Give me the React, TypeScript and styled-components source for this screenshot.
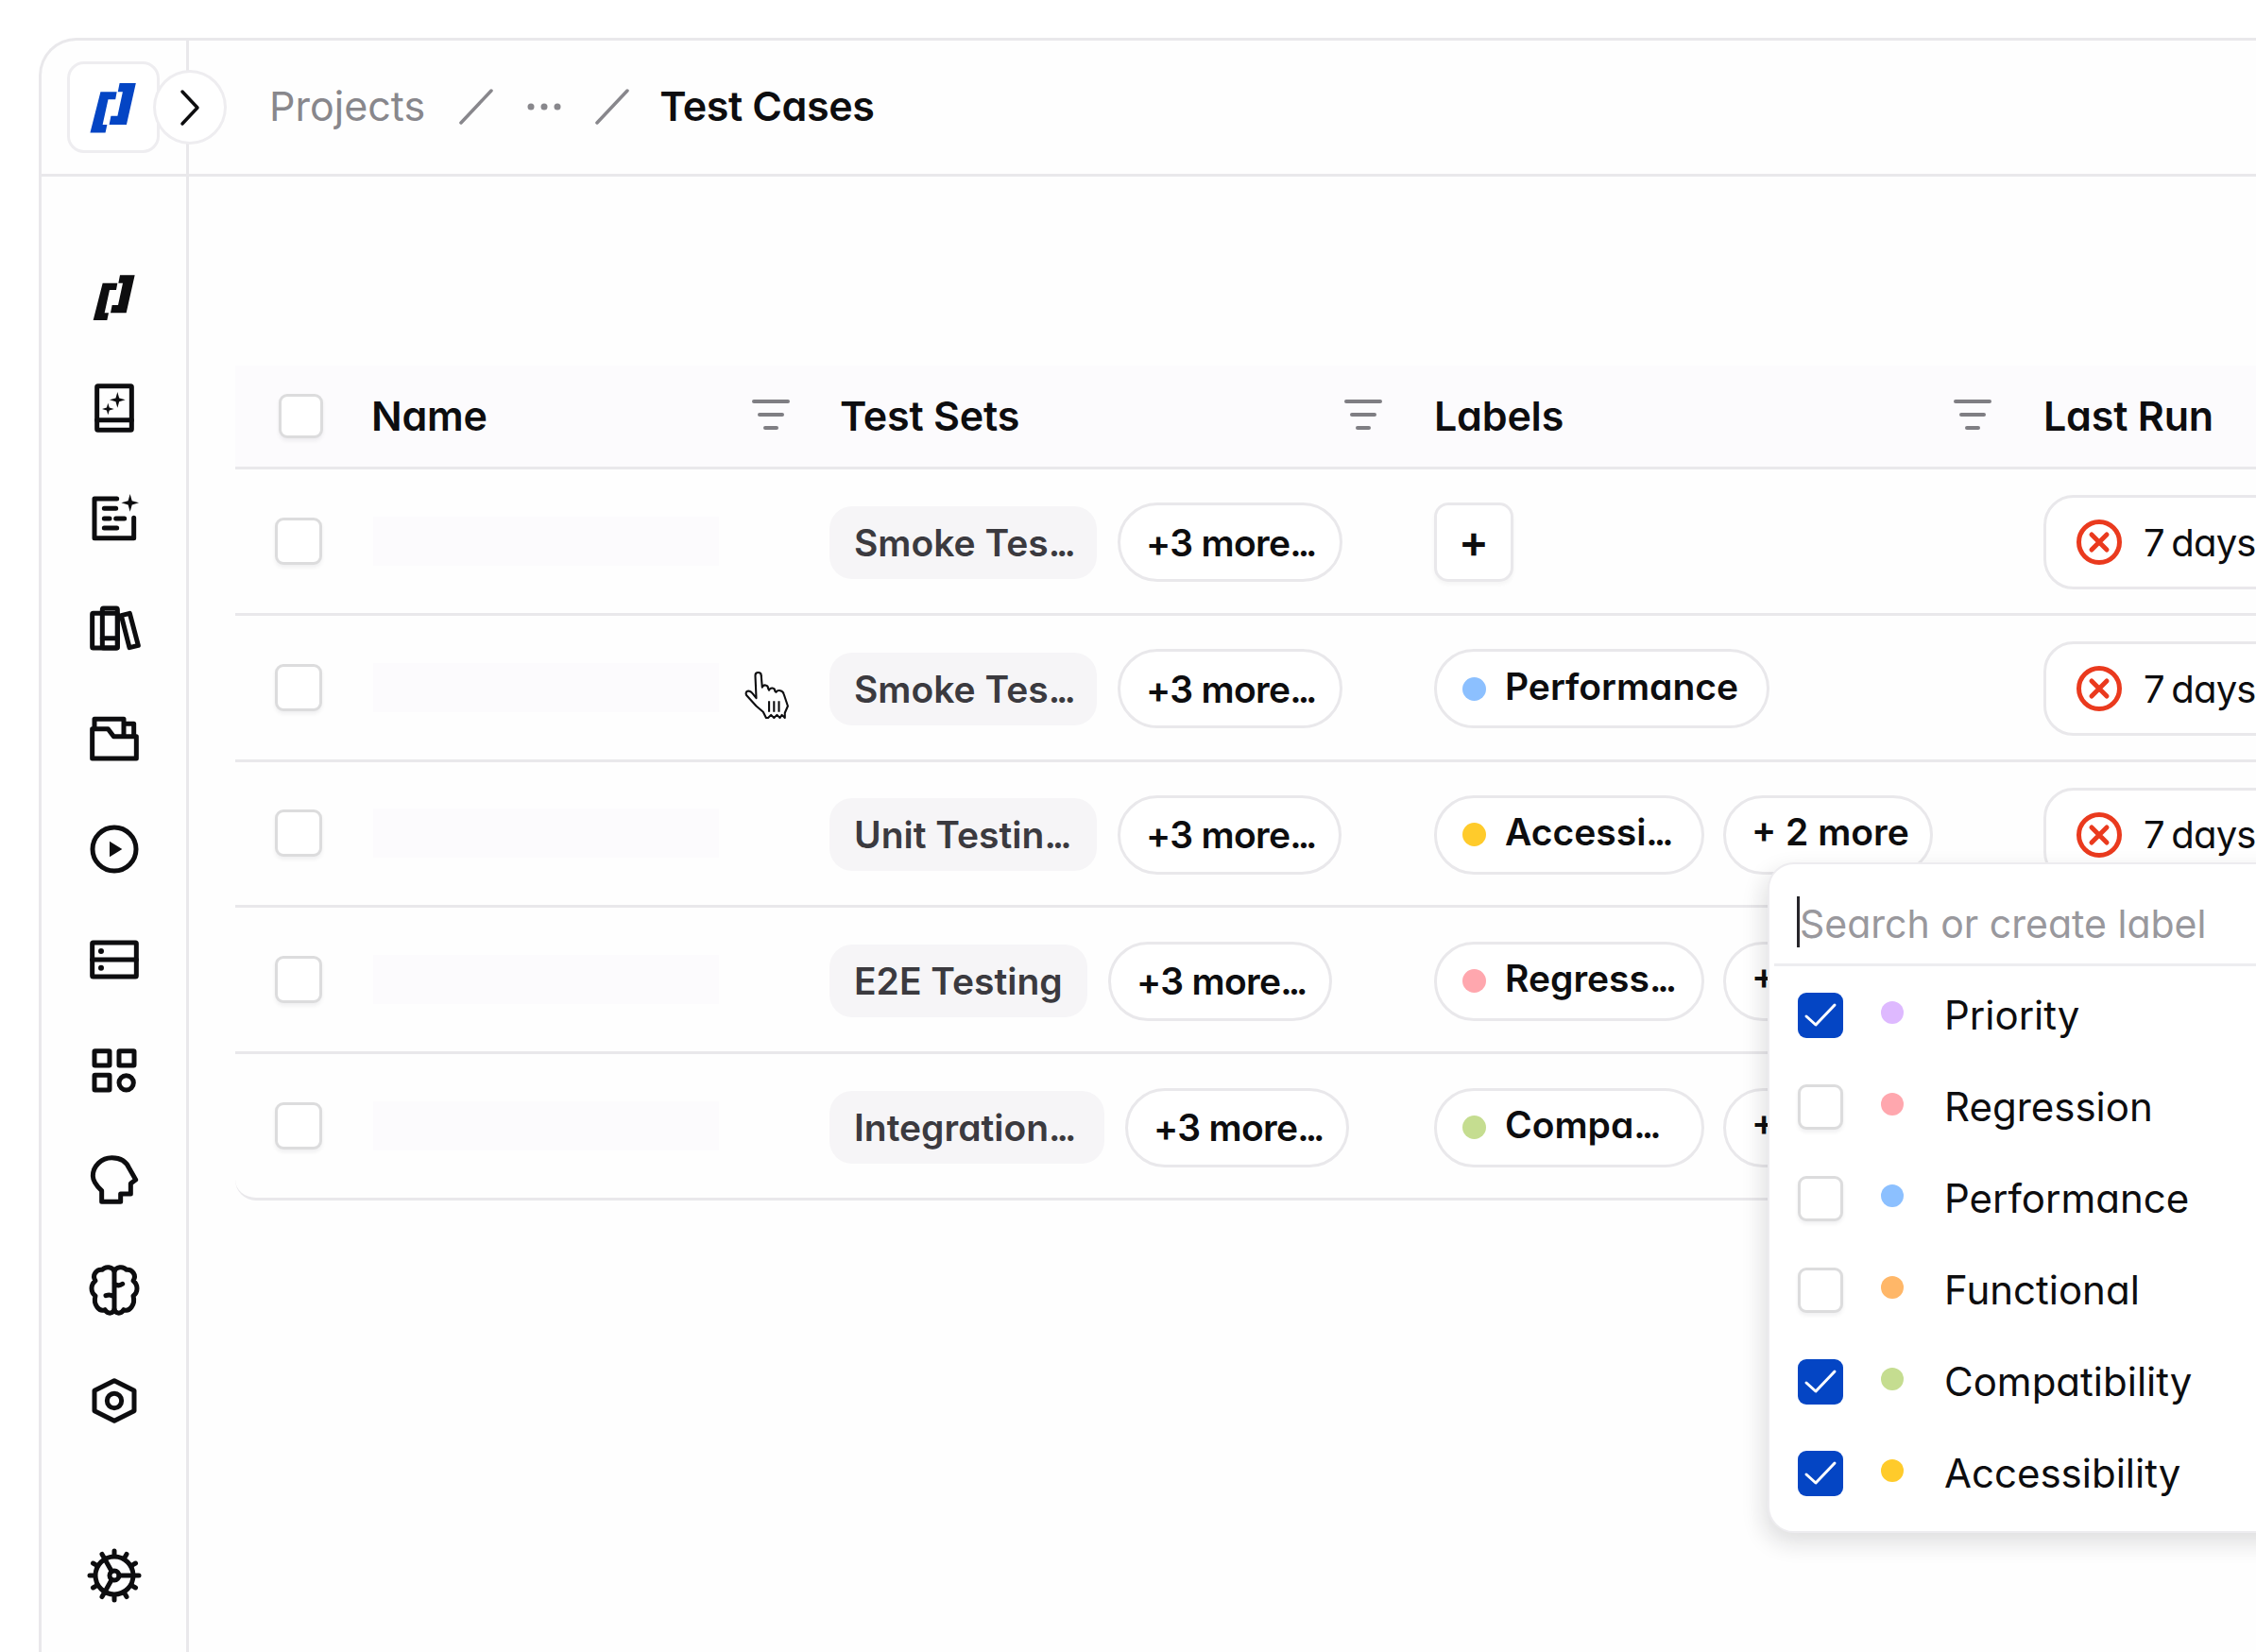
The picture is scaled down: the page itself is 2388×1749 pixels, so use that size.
import React from "react";
import styled, { createGlobalStyle } from "styled-components";

const Global = createGlobalStyle`
  html, body { margin: 0; height: 100%; overflow: hidden; background: #fff; }
  #root { height: 100%; }
  * { box-sizing: border-box; }
  body { font-family: Inter, "Liberation Sans", sans-serif; font-feature-settings: "cv11" 1; color: #0d0d0f; }
`;

const line = "#e9e8eb";

const Page = styled.div`
  height: 100vh;
  padding: 40px 0 0 41px;
  overflow: hidden;
  display: flex;
`;
const Frame = styled.div`
  flex: 1;
  min-width: 0;
  display: flex;
  flex-direction: column;
  background: #fefefe;
  border: 3px solid ${line};
  border-right: 0;
  border-bottom: 0;
  border-top-left-radius: 40px;
  overflow: hidden;
`;
const Header = styled.header`
  height: 144px;
  flex: none;
  display: flex;
  align-items: center;
  border-bottom: 3px solid ${line};
`;
const HeaderSide = styled.div`
  position: relative;
  width: 156px;
  height: 100%;
  flex: none;
  display: flex;
  align-items: center;
  padding-left: 27px;
  border-right: 3px solid ${line};
`;
const LogoButton = styled.div`
  width: 98px;
  height: 97px;
  display: flex;
  align-items: center;
  justify-content: center;
  background: #fff;
  border: 3px solid #eeedf0;
  border-radius: 18px;
`;
const Toggle = styled.div`
  position: absolute;
  left: 118px;
  top: 31px;
  width: 78px;
  height: 79px;
  display: flex;
  align-items: center;
  justify-content: center;
  background: #fff;
  border: 3px solid #eeedf0;
  border-radius: 50%;
`;
const Crumbs = styled.nav`
  display: flex;
  align-items: center;
  gap: 36px;
  padding: 0 0 2px 85px;
  font-size: 43px;
  line-height: 1;
`;
const CrumbMuted = styled.span`
  color: #88878c;
  font-weight: 400;
`;
const CrumbCurrent = styled.span`
  font-weight: 600;
  margin-left: -4px;
  letter-spacing: -0.4px;
`;
const Body = styled.div`
  flex: 1;
  min-height: 0;
  display: flex;
`;
const Sidebar = styled.aside`
  width: 156px;
  flex: none;
  display: flex;
  flex-direction: column;
  align-items: center;
  gap: 52.8px;
  padding: 96px 0 49px;
  border-right: 3px solid ${line};
`;
const NavItem = styled.div<{ $end?: boolean }>`
  width: 60px;
  height: 64px;
  display: flex;
  align-items: center;
  justify-content: center;
  margin-top: ${(p) => (p.$end ? "auto" : "0")};
`;
const Svg = styled.svg`
  width: 60px;
  height: 60px;
  display: block;
  fill: none;
  stroke: #0d0d0f;
  stroke-width: 15;
  stroke-linejoin: round;
  stroke-linecap: round;
`;
const Main = styled.main`
  flex: 1;
  min-width: 0;
  padding: 200px 0 0 49px;
  overflow: hidden;
`;
const Table = styled.div`
  position: relative;
  width: 2139px;
`;
const columns = "144px 485px 640px 645px 225px";
const HeadRow = styled.div`
  display: grid;
  grid-template-columns: ${columns};
  align-items: center;
  height: 110px;
  background: #fcfbfd;
  border-bottom: 3px solid ${line};
`;
const HeadBox = styled.div`
  padding-left: 46px;
`;
const HeadCell = styled.div<{ $indent?: number; $end?: number }>`
  display: flex;
  align-items: center;
  justify-content: space-between;
  padding: 0 ${(p) => p.$end ?? 42}px 2px ${(p) => p.$indent ?? 0}px;
  font-size: 43px;
  font-weight: 600;
  letter-spacing: -0.2px;
`;
const Filter = styled.svg`
  width: 40px;
  height: 33px;
  flex: none;
  fill: #7f7e83;
`;
const Row = styled.div<{ $last?: boolean }>`
  display: grid;
  grid-template-columns: ${columns};
  align-items: center;
  height: 154.8px;
  border-bottom: 3px solid ${line};
  border-bottom-left-radius: ${(p) => (p.$last ? "22px" : "0")};
`;
const RowBox = styled.div`
  padding-left: 42px;
`;
const Check = styled.div<{ $on?: boolean; $size?: number }>`
  width: ${(p) => p.$size ?? 50}px;
  height: ${(p) => p.$size ?? 50}px;
  flex: none;
  display: flex;
  align-items: center;
  justify-content: center;
  border-radius: 9px;
  background: ${(p) => (p.$on ? "#0445c4" : "#fff")};
  border: ${(p) => (p.$on ? "0" : "3px solid #dcdcdd")};
  box-shadow: ${(p) => (p.$on ? "none" : "0 3px 4px rgba(20,20,30,0.06)")};
`;
const Skeleton = styled.div`
  width: 366px;
  height: 52px;
  margin-left: 2px;
  background: #fcfbfd;
`;
const Cell = styled.div<{ $gap?: number }>`
  display: flex;
  align-items: center;
  gap: ${(p) => p.$gap ?? 22}px;
  padding-top: 3px;
`;
const SetChip = styled.div<{ $w: number }>`
  width: ${(p) => p.$w}px;
  height: 77px;
  flex: none;
  display: flex;
  align-items: center;
  padding-left: 26px;
  white-space: nowrap;
  font-size: 39px;
  font-weight: 600;
  color: #3b3a3f;
  background: #f6f5f7;
  border-radius: 24px;
`;
const OutlineChip = styled.div<{ $w: number; $pad?: number }>`
  width: ${(p) => p.$w}px;
  height: 84px;
  flex: none;
  display: flex;
  align-items: center;
  gap: 20px;
  padding-left: ${(p) => p.$pad ?? 27}px;
  white-space: nowrap;
  font-size: 39px;
  font-weight: 600;
  color: #0d0d0f;
  background: #fff;
  border: 3px solid ${line};
  border-radius: 42px;
`;
const MoreText = styled.span`
  letter-spacing: -0.7px;
`;
const Dots = styled.span`
  letter-spacing: -4px;
`;
const Plus = styled.div`
  width: 84px;
  height: 84px;
  display: flex;
  align-items: center;
  justify-content: center;
  padding-bottom: 3px;
  background: #fff;
  border: 3px solid ${line};
  border-radius: 15px;
  box-shadow: 0 3px 4px rgba(20, 20, 30, 0.04);
  font-size: 48px;
  font-weight: 600;
`;
const Dot = styled.span<{ $c: string; $size?: number }>`
  width: ${(p) => p.$size ?? 25}px;
  height: ${(p) => p.$size ?? 25}px;
  flex: none;
  border-radius: 50%;
  background: ${(p) => p.$c};
`;
const ChipText = styled.span`
  margin-bottom: 6px;
`;
const RunChip = styled.div`
  width: 420px;
  height: 100px;
  flex: none;
  display: flex;
  align-items: center;
  gap: 22px;
  padding-left: 31px;
  background: #fff;
  border: 3px solid ${line};
  border-radius: 32px;
  font-size: 40px;
  font-weight: 400;
  letter-spacing: -0.8px;
  word-spacing: -3px;
  white-space: nowrap;
`;
const RunIcon = styled.svg`
  width: 50px;
  height: 50px;
  flex: none;
  fill: none;
  stroke: #ea3a1e;
  stroke-linecap: round;
`;
const Popup = styled.div`
  position: absolute;
  left: 1622px;
  top: 526px;
  width: 640px;
  height: 710px;
  background: #fff;
  border: 2px solid #edecef;
  border-radius: 28px;
  box-shadow: -4px 10px 24px rgba(20, 20, 30, 0.14);
`;
const Search = styled.div`
  height: 108px;
  display: flex;
  align-items: center;
  margin-left: 5px;
  padding: 20px 0 0 24px;
  border-bottom: 3px solid #ededf0;
  font-size: 41px;
  color: #99989d;
  white-space: nowrap;
`;
const Caret = styled.span`
  width: 3px;
  height: 54px;
  margin-bottom: 4px;
  flex: none;
  background: #26252a;
`;
const List = styled.div`
  padding-top: 3px;
`;
const Item = styled.div`
  height: 97px;
  display: flex;
  align-items: center;
  padding-left: 30px;
  font-size: 42px;
  font-weight: 400;
`;
const ItemDot = styled(Dot)`
  margin: 0 43px 5px 40px;
`;
const Cursor = styled.svg`
  position: absolute;
  left: 539px;
  top: 323px;
  width: 48px;
  height: 52px;
  fill: #fff;
  stroke: #0d0d0f;
  stroke-width: 2;
  stroke-linejoin: round;
`;

const star = (x: number, y: number, r: number) => {
  const k = r * 0.22;
  return `M${x},${y - r} L${x + k},${y - k} L${x + r},${y} L${x + k},${y + k} L${x},${y + r} L${x - k},${y + k} L${x - r},${y} L${x - k},${y - k} Z`;
};
const solid = { fill: "#0d0d0f", stroke: "none" };
const V = "0 0 180 180";

const BrandMark = styled.svg<{ $size: number; $c: string }>`
  display: block;
  width: ${(p) => p.$size}px;
  height: ${(p) => p.$size}px;
  fill: ${(p) => p.$c};
`;
const Brand = ({ c, size }: { c: string; size: number }) => (
  <BrandMark viewBox="0 0 180 180" $size={size} $c={c}>
    <path d="M53,44 L100,44 L96,66 L75,66 L59,139 L72,139 L67,162 L23,162 Z" />
    <path d="M108,19 L155,19 L128,139 L78,139 L83,114 L102,114 L117,44 L103,44 Z" />
  </BrandMark>
);

const icons: React.ReactNode[] = [
  <Brand c="#0d0d0f" size={60} />,
  <Svg viewBox={V}>
    <rect x="35" y="20" width="110" height="140" rx="3" />
    <path d="M35,128 H145" />
    <path d={star(100, 64, 25)} {...solid} />
    <path d={star(70, 93, 19)} {...solid} />
  </Svg>,
  <Svg viewBox={V}>
    <path d="M98,27 H27 V152 H152 V88" />
    <path d="M58,58 H95 M58,90 H75 M95,90 H122 M58,120 H98" />
    <path d={star(140, 40, 28)} {...solid} />
  </Svg>,
  <Svg viewBox={V}>
    <rect x="20" y="43" width="80" height="110" rx="3" />
    <rect x="52" y="27" width="48" height="126" rx="4" />
    <path d="M52,122 H100" />
    <path d="M112,50 L139,43 L166,145 L138,152 Z" />
  </Svg>,
  <Svg viewBox={V}>
    <path d="M20,153 V59 H70 L88,83 H160 V153 Z" />
    <path d="M27,56 V28 H120 V79 M120,43 H152 V79" />
  </Svg>,
  <Svg viewBox={V}>
    <circle cx="90" cy="90" r="69" />
    <path d="M75,65 L115,90 L75,115 Z" {...solid} />
  </Svg>,
  <Svg viewBox={V}>
    <rect x="20" y="36" width="140" height="108" rx="3" />
    <path d="M20,90 H160" />
    <circle cx="48" cy="63" r="9" {...solid} />
    <circle cx="48" cy="116" r="9" {...solid} />
  </Svg>,
  <Svg viewBox={V}>
    <rect x="27" y="29" width="48" height="46" rx="2" />
    <rect x="105" y="29" width="48" height="46" rx="2" />
    <rect x="27" y="106" width="48" height="47" rx="2" />
    <circle cx="128" cy="130" r="23" />
  </Svg>,
  <Svg viewBox={V}>
    <path d="M50,160 V125 C32,108 22,90 22,78 C22,46 50,20 82,20 C112,20 130,35 138,55 L158,90 L142,102 V135 H110 V160 Z" />
  </Svg>,
  <Svg viewBox={V}>
    <path d="M90,30 C85,16 62,12 52,25 C34,22 18,42 30,60 C14,72 14,96 30,108 C22,135 42,160 60,152 C70,168 88,164 90,150 C92,164 110,168 120,152 C138,160 158,135 150,108 C166,96 166,72 150,60 C162,42 146,22 128,25 C118,12 95,16 90,30 Z" />
    <path d="M90,30 V150 M90,68 C98,76 108,76 116,70 M90,112 C82,104 72,104 63,107" />
  </Svg>,
  <Svg viewBox={V}>
    <path d="M90,26 L153,58 V122 L90,154 L27,122 V58 Z" />
    <circle cx="90" cy="90" r="23" />
  </Svg>,
];

const Gear = () => (
  <Svg viewBox={V}>
    <circle cx="90" cy="90" r="60" />
    <circle cx="90" cy="90" r="15" />
    <path d="M105,90 H150 M82,77 L60,38 M82,103 L60,142" />
    {Array.from({ length: 12 }, (_, i) => {
      const a = (i * Math.PI) / 6;
      return (
        <line
          key={i}
          x1={90 + 64 * Math.cos(a)}
          y1={90 + 64 * Math.sin(a)}
          x2={90 + 78 * Math.cos(a)}
          y2={90 + 78 * Math.sin(a)}
        />
      );
    })}
  </Svg>
);

const FilterIcon = () => (
  <Filter viewBox="0 0 40 33">
    <rect x="0" y="0" width="40" height="4" rx="2" />
    <rect x="6" y="14" width="28" height="4" rx="2" />
    <rect x="12" y="28" width="16" height="4" rx="2" />
  </Filter>
);

const Tick = () => (
  <svg viewBox="0 0 48 48" width="48" height="48" fill="none" stroke="#fff" strokeWidth="3" strokeLinecap="round" strokeLinejoin="round">
    <path d="M9,25 L19,34 L39,13" />
  </svg>
);

const Fail = () => (
  <RunIcon viewBox="0 0 50 50">
    <circle cx="25" cy="25" r="21.5" strokeWidth="5" />
    <path d="M17,17 L33,33 M33,17 L17,33" strokeWidth="5" />
  </RunIcon>
);

const Clip = ({ text }: { text: string }) =>
  text.endsWith("...") ? (
    <>
      {text.slice(0, -3)}
      <Dots>...</Dots>
    </>
  ) : (
    <>{text}</>
  );

type LabelChip = { text: string; color: string };
const rows: { set: string; setW: number; moreW: number; label?: LabelChip; labelW?: number; two?: boolean }[] = [
  { set: "Smoke Tes...", setW: 283, moreW: 238 },
  { set: "Smoke Tes...", setW: 283, moreW: 238, label: { text: "Performance", color: "#8cc0ff" }, labelW: 355 },
  { set: "Unit Testin...", setW: 283, moreW: 237, label: { text: "Accessi...", color: "#ffcb2b" }, labelW: 286, two: true },
  { set: "E2E Testing", setW: 273, moreW: 237, label: { text: "Regress...", color: "#ffa7ae" }, labelW: 286, two: true },
  { set: "Integration...", setW: 291, moreW: 237, label: { text: "Compa...", color: "#c5dd90" }, labelW: 286, two: true },
];

const options = [
  { text: "Priority", color: "#deb9ff", on: true },
  { text: "Regression", color: "#ffa7ae", on: false },
  { text: "Performance", color: "#8cc0ff", on: false },
  { text: "Functional", color: "#ffb768", on: false },
  { text: "Compatibility", color: "#c5dd90", on: true },
  { text: "Accessibility", color: "#ffcb2b", on: true },
];

export default function App() {
  return (
    <Page>
      <Global />
      <Frame>
        <Header>
          <HeaderSide>
            <LogoButton>
              <Brand c="#0445c4" size={66} />
            </LogoButton>
            <Toggle>
              <svg viewBox="0 0 24 40" width="24" height="40" fill="none" stroke="#0d0d0f" strokeWidth="3.5" strokeLinecap="round" strokeLinejoin="round">
                <path d="M4,3 L20,20 L4,37" />
              </svg>
            </Toggle>
          </HeaderSide>
          <Crumbs>
            <CrumbMuted>Projects</CrumbMuted>
            <svg viewBox="0 0 36 38" width="36" height="38" fill="none" stroke="#88878c" strokeWidth="3.5" strokeLinecap="round">
              <path d="M2,36 L34,2" />
            </svg>
            <svg viewBox="0 0 36 8" width="36" height="8" fill="#88878c">
              <circle cx="4" cy="4" r="3.5" />
              <circle cx="18" cy="4" r="3.5" />
              <circle cx="32" cy="4" r="3.5" />
            </svg>
            <svg viewBox="0 0 36 38" width="36" height="38" fill="none" stroke="#88878c" strokeWidth="3.5" strokeLinecap="round">
              <path d="M2,36 L34,2" />
            </svg>
            <CrumbCurrent>Test Cases</CrumbCurrent>
          </Crumbs>
        </Header>
        <Body>
          <Sidebar>
            {icons.map((icon, i) => (
              <NavItem key={i}>{icon}</NavItem>
            ))}
            <NavItem $end>
              <Gear />
            </NavItem>
          </Sidebar>
          <Main>
            <Table>
              <HeadRow>
                <HeadBox>
                  <Check $size={47} />
                </HeadBox>
                <HeadCell>
                  Name
                  <FilterIcon />
                </HeadCell>
                <HeadCell $indent={11} $end={55}>
                  Test Sets
                  <FilterIcon />
                </HeadCell>
                <HeadCell $end={55}>
                  Labels
                  <FilterIcon />
                </HeadCell>
                <HeadCell>Last Run</HeadCell>
              </HeadRow>
              {rows.map((r, i) => (
                <Row key={i} $last={i === rows.length - 1}>
                  <RowBox>
                    <Check />
                  </RowBox>
                  <div>
                    <Skeleton />
                  </div>
                  <Cell>
                    <SetChip $w={r.setW}>
                      <span>
                        <Clip text={r.set} />
                      </span>
                    </SetChip>
                    <OutlineChip $w={r.moreW}>
                      <MoreText>
                        <Clip text="+3 more..." />
                      </MoreText>
                    </OutlineChip>
                  </Cell>
                  <Cell $gap={20}>
                    {r.label ? (
                      <OutlineChip $w={r.labelW ?? 286}>
                        <Dot $c={r.label.color} />
                        <ChipText>
                          <Clip text={r.label.text} />
                        </ChipText>
                      </OutlineChip>
                    ) : (
                      <Plus>+</Plus>
                    )}
                    {r.two && (
                      <OutlineChip $w={222}>
                        <ChipText>+ 2 more</ChipText>
                      </OutlineChip>
                    )}
                  </Cell>
                  <Cell>
                    <RunChip>
                      <Fail />7 days
                    </RunChip>
                  </Cell>
                </Row>
              ))}
              <Cursor viewBox="0 0 46 48">
                <path d="M12,27 L11,4 C11,0 17,0 17,4 L18,16 C19,13 24,13 24,17 L25,19 C26,16 31,16 31,20 L32,21 C34,18 39,19 40,23 L44,35 L41,42 L41,47 L38,44 L36,47 L33,44 L30,47 L27,44 L24,47 L22,47 L19,41 L12,35 L2,24 C0,20 5,18 8,22 Z" />
                <path d="M25,30 V41 M30,30 V41 M35,30 V41" fill="none" />
              </Cursor>
              <Popup>
                <Search>
                  <Caret />
                  Search or create label
                </Search>
                <List>
                  {options.map((o) => (
                    <Item key={o.text}>
                      <Check $on={o.on} $size={48}>
                        {o.on && <Tick />}
                      </Check>
                      <ItemDot $c={o.color} $size={24} />
                      {o.text}
                    </Item>
                  ))}
                </List>
              </Popup>
            </Table>
          </Main>
        </Body>
      </Frame>
    </Page>
  );
}
